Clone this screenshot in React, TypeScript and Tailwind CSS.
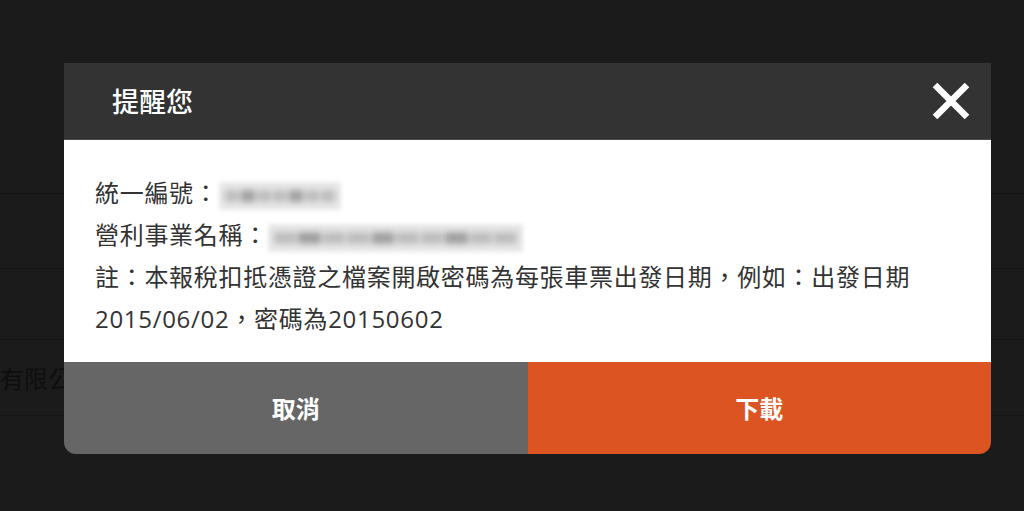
import React from "react";

const font = { fontFamily: '"Open Sans", "Noto Sans CJK TC", sans-serif' };

function Blur({ w, dots }: { w: number; dots: number }) {
  return (
    <span className="relative inline-block h-[28px] align-middle" style={{ width: w }}>
      <span className="absolute inset-0 rounded-[3px] bg-[#e8e8e8] blur-[2px]" />
      <span className="absolute inset-x-[6px] top-[8px] flex h-[12px] gap-[2px] blur-[3px]">
        {Array.from({ length: dots }).map((_, i) => (
          <span key={i} className={`h-full flex-1 ${i % 3 === 1 ? "bg-[#a0a0a0]" : "bg-[#bdbdbd]"}`} />
        ))}
      </span>
    </span>
  );
}

export default function App() {
  return (
    <div className="relative h-[511px] w-[1024px] overflow-hidden bg-[#1b1b1b]" style={font}>
      {/* background page */}
      <div className="flex flex-col pt-[193px] text-[24px] text-[#0e0e0e]" style={{ fontFamily: '"Noto Sans CJK TC", sans-serif' }}>
        <div className="h-[75px] border-t border-[#141414]" />
        <div className="h-[71px] border-t border-[#141414]" />
        <div className="flex h-[76px] items-center border-t border-[#141414]">有限公司</div>
        <div className="h-[75px] border-t border-[#141414]" />
      </div>

      {/* modal */}
      <div className="absolute left-[64px] top-[63px] flex w-[927px] flex-col overflow-hidden rounded-b-[12px]">
        <div className="flex h-[77px] items-center justify-between border-b border-[#4a4a4a] bg-[#333333] pl-[48px] pr-[20px]">
          <div className="text-[27px] font-medium text-white" style={{ fontFamily: '"Noto Sans CJK TC", sans-serif' }}>
            提醒您
          </div>
          <svg width="40" height="40" viewBox="0 0 40 40">
            <path d="M4 4 L36 36 M36 4 L4 36" stroke="#fff" strokeWidth="6.5" strokeLinecap="butt" />
          </svg>
        </div>
        <div className="bg-white pb-[22px] pl-[31px] pr-[20px] pt-[32px] text-[24px] leading-[42px] tracking-[0.7px] text-[#333333]">
          <div>
            統一編號：<Blur w={122} dots={7} />
          </div>
          <div>
            營利事業名稱：<Blur w={255} dots={10} />
          </div>
          <div>註：本報稅扣抵憑證之檔案開啟密碼為每張車票出發日期，例如：出發日期 2015/06/02，密碼為20150602</div>
        </div>
        <div className="flex h-[92px] text-[24px] font-bold text-white" style={{ fontFamily: '"Noto Sans CJK TC", sans-serif' }}>
          <button className="flex flex-1 items-center justify-center bg-[#666666]">取消</button>
          <button className="flex flex-1 items-center justify-center bg-[#db5421]">下載</button>
        </div>
      </div>
    </div>
  );
}
